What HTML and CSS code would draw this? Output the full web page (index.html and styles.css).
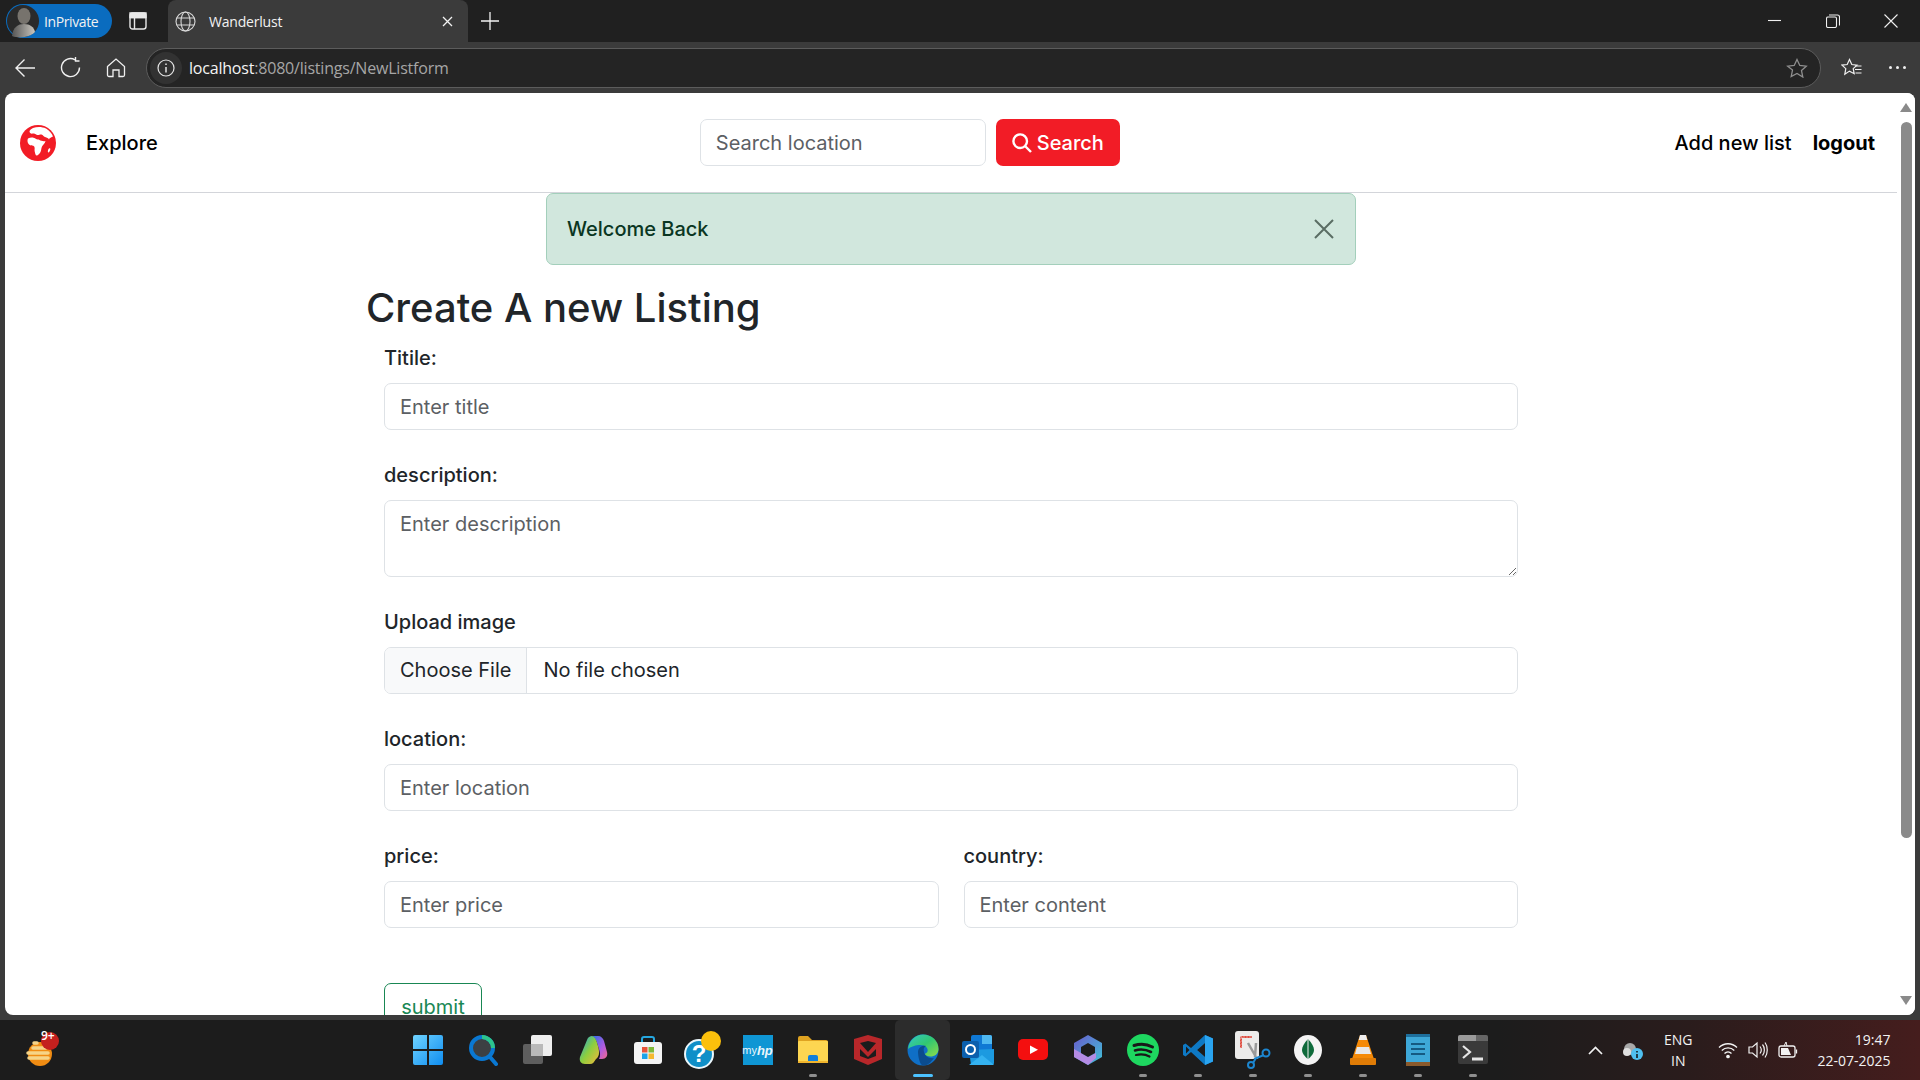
FILE: index.html
```html
<!DOCTYPE html>
<html lang="en">
<head>
    <meta charset="UTF-8">
    <meta name="viewport" content="width=device-width, initial-scale=1.0">
    <title>Wanderlust</title>
    <link rel="stylesheet" href="styles.css">
</head>
<body>
    <div class="browser">
        <!-- Title bar -->
        <div class="titlebar">
            <div class="inprivate">
                <span class="avatar">
                    <svg width="34" height="34" viewBox="0 0 34 34"><defs><linearGradient id="av" x1="0" x2="1"><stop offset="0" stop-color="#555"/><stop offset="1" stop-color="#c9c5bd"/></linearGradient></defs><circle cx="17" cy="17" r="16" fill="#2a2a2a"/><ellipse cx="18" cy="12" rx="6.5" ry="8" fill="#77736d"/><path d="M6 32c1-9 6-12 12-12s10 3 11 8c-5 5-15 7-23 4z" fill="url(#av)"/></svg>
                </span>
                <span>InPrivate</span>
            </div>
            <svg class="tab-actions" width="18" height="18" viewBox="0 0 18 18" fill="none" stroke="#e8e8e8" stroke-width="1.4"><rect x="1" y="1" width="16" height="16" rx="2.5"/><path d="M1 5.5h16M5.5 5.5V17"/><path d="M1 1h16v4.5H1z" fill="#e8e8e8"/></svg>
            <div class="tab">
                <svg width="21" height="21" viewBox="0 0 21 21" fill="none" stroke="#d8d8d8" stroke-width="1.1"><circle cx="10.5" cy="10.5" r="9.5"/><ellipse cx="10.5" cy="10.5" rx="4.5" ry="9.5"/><path d="M1.8 7h17.4M1.8 14h17.4"/></svg>
                <span class="tab-title">Wanderlust</span>
                <svg class="tab-close" width="11" height="11" viewBox="0 0 11 11" stroke="#f2f2f2" stroke-width="1.3"><path d="M1 1l9 9M10 1l-9 9"/></svg>
            </div>
            <svg class="new-tab" width="18" height="18" viewBox="0 0 18 18" stroke="#f2f2f2" stroke-width="1.3"><path d="M9 0v18M0 9h18"/></svg>
            <div class="window-controls">
                <svg width="14" height="14" viewBox="0 0 14 14" stroke="#f0f0f0" stroke-width="1.1"><path d="M0 6.5h13"/></svg>
                <svg width="14" height="14" viewBox="0 0 14 14" fill="none" stroke="#f0f0f0" stroke-width="1.1"><rect x=".5" y="3" width="10" height="10.5" rx="1.5"/><path d="M3 1h8.5A2 2 0 0 1 13.500 3v8.500"/></svg>
                <svg width="14" height="14" viewBox="0 0 14 14" stroke="#f0f0f0" stroke-width="1.1"><path d="M.5.5l13 13M13.500.5l-13 13"/></svg>
            </div>
        </div>

        <!-- Toolbar -->
        <div class="toolbar">
            <svg class="tool-back" width="20" height="20" viewBox="0 0 20 20" fill="none" stroke="#f0f0f0" stroke-width="1.4"><path d="M20 10H1M9.500 1.500L1 10l8.500 8.500"/></svg>
            <svg class="tool-reload" width="21" height="21" viewBox="0 0 21 21" fill="none" stroke="#f0f0f0" stroke-width="1.4"><path d="M15 2.800A9 9 0 1 0 19.500 10.500"/><path d="M15.500 0v4h4"/></svg>
            <svg class="tool-home" width="20" height="20" viewBox="0 0 20 20" fill="none" stroke="#f0f0f0" stroke-width="1.3"><path d="M1.500 8.500L10 1l8.500 7.500V17a1.500 1.500 0 0 1-1.500 1.500h-4V12H7v6.500H3A1.500 1.500 0 0 1 1.500 17z"/></svg>
            <div class="address-bar">
                <span class="site-info">
                    <svg width="18" height="18" viewBox="0 0 18 18" fill="none" stroke="#e4e4e4" stroke-width="1.2"><circle cx="9" cy="9" r="8"/><path d="M9 8v5.500M9 4.500v1.500" stroke-width="1.500"/></svg>
                </span>
                <span class="url"><span class="url-host">localhost</span>:8080/listings/NewListform</span>
                <svg class="addr-star" width="22" height="20" viewBox="0 0 22 20" fill="none" stroke="#8f8f8f" stroke-width="1.3"><path d="M11 1.500l2.800 6 6.500.7-4.800 4.400 1.300 6.400L11 15.400l-5.800 3.100 1.300-6.400L1.700 8.200l6.500-.7z"/></svg>
            </div>
            <svg class="tool-fav" width="21" height="20" viewBox="0 0 21 20" fill="none" stroke="#f0f0f0" stroke-width="1.200"><path d="M8.500 1.500l2.300 5 5.200.6-3.800 3.500 1 5.100-4.700-2.600-4.700 3.200 1-5.700L1 7.100l5.200-.6z"/><path d="M14 8h6.500M14 11.500h6.500M14.500 15h6"/></svg>
            <div class="tool-more"><i></i><i></i><i></i></div>
        </div>

        <!-- Page -->
        <div class="viewport">
            <div class="page">
                <nav class="navbar">
                    <svg class="brand" width="36" height="36" viewBox="0 0 36 36"><circle cx="18" cy="18" r="18" fill="#f21c26"/><path fill="#fff" d="M13 3c4-1.500 9-1.500 13 .5 3.500 2 6 5 7 8-1.500 1-3.500 1-4 3-.7-1.500-2-2-4-2.500-1.500-.5-2-2-3.500-2.500-1.500-.5-2.500 1-4 .5S15 8 13 8.500 9.500 8 9.500 6.500 11.500 4 13 3z"/><path fill="#fff" d="M8 13.500c3-1.500 6-1 8 .5 1 .7 2.500.2 3.500 1 1.500 1 4 1.500 6 1-.5 2.500-2.500 3.500-3.500 5.500s-.5 3.500-1.500 5.500c-.8 1.500-2.500 3.500-3.800 3.500-1.200 0-1.500-2-2-4s.5-3.500-.5-5-3-.5-4.500-1.500-3-3.500-1.700-6.500z"/><path fill="#fff" d="M29 23.500c.7-.5 1.500 0 1.300 1s-1.200 3-2 3-.5-3 .7-4z"/></svg>
                    <a class="nav-link explore" href="#">Explore</a>
                    <form class="nav-search">
                        <input class="control search-input" type="text" placeholder="Search location">
                        <button class="search-btn" type="button">
                            <svg width="20" height="20" viewBox="0 0 20 20" fill="none" stroke="#fff" stroke-width="2.400"><circle cx="8.200" cy="8.200" r="6.800"/><path d="M13 13l6 6"/></svg>
                            Search
                        </button>
                    </form>
                    <div class="nav-right">
                        <a class="nav-link" href="#">Add new list</a>
                        <a class="nav-link logout" href="#">logout</a>
                    </div>
                </nav>

                <div class="alert">
                    <span>Welcome Back</span>
                    <svg width="20" height="20" viewBox="0 0 20 20" stroke="#5a6d64" stroke-width="2"><path d="M1 1l18 18M19 1L1 19"/></svg>
                </div>

                <main class="listing">
                    <h2 class="listing-title">Create A new Listing</h2>
                    <form class="listing-form">
                        <div class="field">
                            <label>Titile:</label>
                            <input class="control" type="text" placeholder="Enter title">
                        </div>
                        <div class="field">
                            <label>description:</label>
                            <textarea class="control" placeholder="Enter description"></textarea>
                        </div>
                        <div class="field">
                            <label>Upload image</label>
                            <input class="control file-input" type="file">
                        </div>
                        <div class="field">
                            <label>location:</label>
                            <input class="control" type="text" placeholder="Enter location">
                        </div>
                        <div class="field-row">
                            <div class="field">
                                <label>price:</label>
                                <input class="control" type="text" placeholder="Enter price">
                            </div>
                            <div class="field">
                                <label>country:</label>
                                <input class="control" type="text" placeholder="Enter content">
                            </div>
                        </div>
                        <button class="submit-btn" type="button">submit</button>
                    </form>
                </main>
            </div>

            <div class="scrollbar">
                <span class="arrow-up"></span>
                <span class="thumb"></span>
                <span class="arrow-down"></span>
            </div>
        </div>

        <!-- Taskbar -->
        <div class="taskbar">
            <div class="task-left">
                <svg width="36" height="36" viewBox="0 0 36 36"><circle cx="16" cy="22" r="12" fill="#f08c13"/><g stroke="#f6d488" stroke-width="3.500" stroke-linecap="round"><path d="M5 26h19M4 21h20M9 16h13M10 11h3"/></g><circle cx="26" cy="9" r="9" fill="#c4201e"/></svg>
                <span class="task-badge">9+</span>
            </div>
            <div class="task-icons">
                <span class="task-icon">
                    <svg width="30" height="30" viewBox="0 0 30 30"><defs><linearGradient id="win" x1="0" y1="0" x2="1" y2="1"><stop offset="0" stop-color="#6fd3ff"/><stop offset="1" stop-color="#0f8df0"/></linearGradient></defs><path fill="url(#win)" d="M2 0h12v14H0V2a2 2 0 0 1 2-2zM16 0h12a2 2 0 0 1 2 2v12H16zM0 16h14v14H2a2 2 0 0 1-2-2zM16 16h14v12a2 2 0 0 1-2 2H16z"/></svg>
                </span>
                <span class="task-icon">
                    <svg width="30" height="32" viewBox="0 0 30 32" fill="none"><circle cx="14" cy="14" r="11" fill="#3c4043" stroke="#0a78d2" stroke-width="4"/><path d="M14 3a11 11 0 0 1 11 11" stroke="#2dc58c" stroke-width="4"/><path d="M22 23l6 7" stroke="#0a78d2" stroke-width="4" stroke-linecap="round"/></svg>
                </span>
                <span class="task-icon">
                    <svg width="30" height="30" viewBox="0 0 30 30"><rect x="0" y="9" width="20" height="20" rx="2" fill="#5e5e5e"/><rect x="8" y="0" width="21" height="21" rx="2" fill="#eeeeee"/><rect x="8" y="9" width="12" height="12" fill="#b9b9b9"/></svg>
                </span>
                <span class="task-icon">
                    <svg width="30" height="30" viewBox="0 0 30 30"><defs><linearGradient id="cop" x1="0" y1="0" x2="1" y2="1"><stop offset="0" stop-color="#17a2e8"/><stop offset=".5" stop-color="#8ccf3e"/><stop offset="1" stop-color="#f5b83c"/></linearGradient><linearGradient id="cop2" x1="0" y1="0" x2="1" y2="1"><stop offset="0" stop-color="#2a6fe8"/><stop offset=".6" stop-color="#b05be0"/><stop offset="1" stop-color="#f06a8a"/></linearGradient></defs><path fill="url(#cop2)" d="M14 1h6c3 0 5 2 6 5l3 11c1 4-1 7-5 7h-3c2-4 1-7-1-13-1-4-3-9-6-10z"/><path fill="url(#cop)" d="M9 5c1-3 3-4 5-4 4 1 5 7 6 10 2 7 1 11-2 13-2 3-3 5-6 5H7c-4 0-6-3-5-7z"/></svg>
                </span>
                <span class="task-icon">
                    <svg width="30" height="30" viewBox="0 0 30 30"><path d="M9 8V4a2 2 0 0 1 2-2h8a2 2 0 0 1 2 2v4" fill="none" stroke="#25a7e0" stroke-width="2"/><rect x="1" y="7" width="28" height="22" rx="3" fill="#f4f4f4"/><rect x="9" y="12" width="5.500" height="5.500" fill="#e8543a"/><rect x="15.500" y="12" width="5.500" height="5.500" fill="#7fba3a"/><rect x="9" y="18.500" width="5.500" height="5.500" fill="#1ea3e8"/><rect x="15.500" y="18.500" width="5.500" height="5.500" fill="#f5b92e"/></svg>
                </span>
                <span class="task-icon">
                    <svg width="38" height="38" viewBox="0 0 38 38"><circle cx="15" cy="23" r="14" fill="#0f8fc8" stroke="#eaf6fb" stroke-width="2"/><text class="help-mark" x="15" y="31" text-anchor="middle">?</text><circle cx="27" cy="10" r="10" fill="#fbc00c"/></svg>
                </span>
                <span class="task-icon">
                    <span class="myhp">my<em>hp</em></span>
                </span>
                <span class="task-icon open">
                    <svg width="30" height="30" viewBox="0 0 30 30"><path d="M0 3a2 2 0 0 1 2-2h8l4 4h14a2 2 0 0 1 2 2v4H0z" fill="#dfa321"/><rect y="6" width="30" height="22" rx="1" fill="#fdd651"/><path d="M10 22a2 2 0 0 1 2-2h6a2 2 0 0 1 2 2v6H10z" fill="#0f7fdc"/><rect x="0" y="26" width="30" height="2" fill="#f0b42d"/></svg>
                </span>
                <span class="task-icon">
                    <svg width="28" height="30" viewBox="0 0 28 30"><path fill="#b8272a" d="M0 4l14-4v6L6 8v13l8 3v6L0 24zM28 4L14 0v6l8 2v13l-8 3v6l14-6z"/><path fill="#b8272a" d="M6 8l8 9 8-9v6l-8 8-8-8z"/></svg>
                </span>
                <span class="task-icon active">
                    <svg width="32" height="32" viewBox="0 0 32 32"><defs><linearGradient id="edge" x1="0" y1="0" x2="1" y2="1"><stop offset="0" stop-color="#36c7c4"/><stop offset=".5" stop-color="#31c871"/><stop offset="1" stop-color="#8fdc4a"/></linearGradient></defs><circle cx="16" cy="16" r="15.500" fill="#0f6fc6"/><path fill="url(#edge)" d="M1 15C2 6 9 .5 16 .5 25 .5 31.500 7 31.500 15c0 5-4 7.500-8 7.500-3 0-5-1-6-2.500 3-1 3.500-3 3-5-1-3-5-4.500-9-4-4 .5-8 2-10.500 4z"/><path fill="#0b4c8e" d="M11 18c0-4 4-7 8-6-2 1-3 3-2 6 1 4 5 7 10 6-3 4-6 7.500-11 7.500-3 0-5-9-5-13.500z"/></svg>
                </span>
                <span class="task-icon">
                    <svg width="32" height="30" viewBox="0 0 32 30"><rect x="9" y="0" width="21" height="29" rx="2" fill="#0f78d4"/><path d="M20 0h8a2 2 0 0 1 2 2v7H20z" fill="#4fb8f0"/><path d="M7 15l25-1v14a2 2 0 0 1-2 2H9z" fill="#1c9ae0"/><path d="M7 30l13-10 12 10z" fill="#34b2f0"/><rect y="6" width="17" height="17" rx="2" fill="#0b5fad"/><circle cx="8.500" cy="14.500" r="4.500" fill="none" stroke="#fff" stroke-width="2"/></svg>
                </span>
                <span class="task-icon">
                    <svg width="30" height="22" viewBox="0 0 30 22"><rect width="30" height="21" rx="5" fill="#f40f0f"/><path d="M12 6.500l8 4.200-8 4.200z" fill="#fff"/></svg>
                </span>
                <span class="task-icon">
                    <svg width="28" height="30" viewBox="0 0 28 30"><defs><linearGradient id="m365" x1="0" y1="0" x2="1" y2="1"><stop offset="0" stop-color="#6a5acd"/><stop offset="1" stop-color="#3fc4d8"/></linearGradient></defs><path fill="url(#m365)" d="M14 0l14 8v14l-14 8L0 22V8z"/><path fill="#b48be4" d="M0 14l14 8 8-4v5l-8 7L0 22z"/><path d="M14 8l7 4v6l-7 4-7-4v-6z" fill="#1c1c1c"/></svg>
                </span>
                <span class="task-icon open">
                    <svg width="32" height="32" viewBox="0 0 32 32" fill="none" stroke="#181818" stroke-linecap="round"><circle cx="16" cy="16" r="16" fill="#1ed760" stroke="none"/><path d="M7 11.500c6-2 13-1.500 18.500 1.500" stroke-width="3"/><path d="M8 16.500c5-1.500 11-1 16 1.500" stroke-width="2.600"/><path d="M9 21c4.500-1 9.500-.7 13.500 1.500" stroke-width="2.200"/></svg>
                </span>
                <span class="task-icon open">
                    <svg width="30" height="30" viewBox="0 0 30 30"><path fill="#0e79c4" d="M22 0l8 3.500v23L22 30 8 17l-5.500 4.500L0 20v-10l2.500-1.500L8 13z"/><path fill="#2aa4f0" d="M22 0l8 3.500v23L22 30zM22 8l-8 7 8 7z"/><path fill="#1c1c1c" d="M22 8v14l-8-7zM3 11.500v7L6.500 15z"/></svg>
                </span>
                <span class="task-icon open">
                    <svg width="36" height="38" viewBox="0 0 36 38"><rect x="0" y="0" width="24" height="28" rx="3" fill="#ecebea"/><path d="M5 5h12v2H5zM5 5h2v12H5z" fill="#e0493d" stroke="#ecebea" stroke-dasharray="2 1" stroke-width=".5"/><path d="M13 12l8 14M21 12l-1 14" stroke="#9a9a9a" stroke-width="2.500"/><circle cx="31" cy="22" r="3.500" fill="none" stroke="#1c86d0" stroke-width="2"/><circle cx="16" cy="34" r="3" fill="none" stroke="#1c86d0" stroke-width="2"/><path d="M29 24l-10 4M18 32l3-5" stroke="#1c86d0" stroke-width="2"/></svg>
                </span>
                <span class="task-icon open">
                    <svg width="30" height="30" viewBox="0 0 30 30"><ellipse cx="15" cy="15" rx="14" ry="15" fill="#f4f4f4"/><path d="M15 4c4 4 6 8 6 11s-3 7-6 9c-3-2-6-6-6-9s2-7 6-11z" fill="#0f6b3b"/><path d="M15 4v25" stroke="#f4f4f4"/></svg>
                </span>
                <span class="task-icon open">
                    <svg width="26" height="30" viewBox="0 0 26 30"><path d="M10 0h6l8 24H2z" fill="#f58a07"/><path d="M7 12h12l2 7H5z" fill="#e8e8e8"/><rect y="23" width="26" height="7" rx="1" fill="#e07c06"/><path d="M10 0h6l1.300 5H8.700z" fill="#eee"/></svg>
                </span>
                <span class="task-icon open">
                    <svg width="24" height="32" viewBox="0 0 24 32"><rect y="2" width="24" height="30" rx="1" fill="#3ea8d8"/><rect y="28" width="24" height="4" fill="#8a5a2c"/><path d="M0 0h24v3H0z" fill="#1e6f9c"/><path d="M5 10h14M5 15h14M5 20h14" stroke="#155a82" stroke-width="2.200"/></svg>
                </span>
                <span class="task-icon open">
                    <svg width="30" height="30" viewBox="0 0 30 30" fill="none"><rect width="30" height="29" rx="2" fill="#3a3a3a"/><path d="M0 2a2 2 0 0 1 2-2h16v6H0z" fill="#9a9a9a"/><path d="M18 0h10a2 2 0 0 1 2 2v4H18z" fill="#666"/><path d="M5 11l7 6-7 6" stroke="#e6e6e6" stroke-width="2.200"/><path d="M14 24h11" stroke="#e6e6e6" stroke-width="3"/></svg>
                </span>
            </div>
            <div class="tray">
                <svg class="tray-caret" width="15" height="9" viewBox="0 0 15 9" fill="none" stroke="#f2f2f2" stroke-width="1.700"><path d="M1 8l6.500-6.500L14 8"/></svg>
                <svg class="tray-cloud" width="22" height="22" viewBox="0 0 22 22"><circle cx="8" cy="10" r="6" fill="#a8a8a8"/><circle cx="5" cy="13" r="4" fill="#e0e0e0"/><circle cx="15" cy="15" r="6" fill="#4fc0f0"/><path d="M15 12v1.500M15 15v4" stroke="#111" stroke-width="1.500"/></svg>
                <div class="tray-lang"><span>ENG</span><span>IN</span></div>
                <svg class="tray-wifi" width="20" height="18" viewBox="0 0 20 18" fill="none" stroke="#f2f2f2" stroke-width="1.300"><path d="M1 6.500c5-5 13-5 18 0M3.800 9.500c3.500-3.500 9-3.500 12.500 0M6.500 12.500c2-2 5-2 7 0"/><circle cx="10" cy="15.500" r="1.200" fill="#f2f2f2"/></svg>
                <svg class="tray-volume" width="20" height="20" viewBox="0 0 20 20" fill="none" stroke="#f2f2f2" stroke-width="1.200"><path d="M1 7h3.500L9 3v14l-4.500-4H1z"/><path d="M12 6.500c1.500 2 1.500 5 0 7M14.500 4.500c2.500 3 2.500 8 0 11M17 2.500c3 4 3 11 0 15"/></svg>
                <svg class="tray-battery" width="20" height="20" viewBox="0 0 20 20" fill="none" stroke="#f2f2f2" stroke-width="1.300"><rect x="1" y="6" width="16" height="11" rx="2"/><path d="M18.500 9.500v4"/><path d="M3 8h7l3 7H3z" fill="#f2f2f2" stroke="none"/><path d="M6 6l2-4M8 2l1 4" stroke-width="1"/></svg>
                <div class="tray-clock"><span>19:47</span><span>22-07-2025</span></div>
            </div>
        </div>
    </div>
</body>
</html>
```

FILE: styles.css
```css
* {
    margin: 0;
    padding: 0;
    box-sizing: border-box;
}

body {
    width: 1920px;
    height: 1080px;
    overflow: hidden;
    background: #3b3b3b;
    font-family: "Inter", "Liberation Sans", sans-serif;
    color: #212529;
}

a {
    text-decoration: none;
}

.browser {
    display: flex;
    flex-direction: column;
    height: 1080px;
}

/* Title bar */
.titlebar {
    display: flex;
    align-items: center;
    height: 42px;
    flex: none;
    background: #202020;
    color: #f2f2f2;
    font-family: "Open Sans", sans-serif;
    font-size: 14px;
}

.inprivate {
    display: flex;
    align-items: center;
    gap: 4px;
    width: 106px;
    height: 34px;
    margin-left: 6px;
    background: #0a6cbf;
    border-radius: 17px;
    font-size: 14px;
    letter-spacing: -0.4px;
}

.avatar {
    display: flex;
    width: 34px;
    height: 34px;
}

.tab-actions {
    margin-left: 17px;
}

.tab {
    display: flex;
    align-items: center;
    align-self: flex-end;
    width: 300px;
    height: 42px;
    margin-left: 21px;
    padding: 0 15px 0 7px;
    background: #3b3b3b;
    border-radius: 8px 8px 0 0;
}

.tab-title {
    flex: 1;
    margin-left: 13px;
    letter-spacing: -0.2px;
}

.new-tab {
    margin-left: 13px;
}

.window-controls {
    display: flex;
    gap: 44px;
    margin-left: auto;
    margin-right: 22px;
}

/* Toolbar */
.toolbar {
    display: flex;
    align-items: center;
    height: 51px;
    flex: none;
    background: #3b3b3b;
}

.tool-back {
    margin-left: 15px;
}

.tool-reload {
    margin-left: 25px;
}

.tool-home {
    margin-left: 25px;
}

.address-bar {
    display: flex;
    align-items: center;
    width: 1675px;
    height: 40px;
    margin-left: 20px;
    background: #242424;
    border: 1px solid #5c5c5c;
    border-radius: 20px;
}

.site-info {
    display: flex;
    align-items: center;
    justify-content: center;
    width: 32px;
    height: 32px;
    margin-left: 3px;
    background: #323232;
    border-radius: 50%;
}

.url {
    flex: 1;
    margin-left: 7px;
    font-family: "Open Sans", sans-serif;
    font-size: 16px;
    letter-spacing: -0.2px;
    color: #a6a6a6;
}

.url-host {
    color: #f4f4f4;
}

.addr-star {
    margin-right: 12px;
}

.tool-fav {
    margin-left: 20px;
}

.tool-more {
    display: flex;
    gap: 4px;
    margin-left: 27px;
}

.tool-more i {
    width: 3px;
    height: 3px;
    background: #f0f0f0;
    border-radius: 50%;
}

/* Page */
.viewport {
    display: flex;
    height: 922px;
    flex: none;
    margin: 0 5px;
    background: #fff;
    border-radius: 8px;
    overflow: hidden;
}

.page {
    flex: 1;
    min-width: 0;
    overflow: hidden;
}

.navbar {
    display: flex;
    align-items: center;
    height: 100px;
    padding: 0 22px 0 15px;
    border-bottom: 1px solid #d3d5da;
}

.brand {
    flex: none;
}

.nav-link {
    font-size: 20px;
    font-weight: 500;
    color: #000;
}

.explore {
    margin-left: 30px;
}

.nav-search {
    display: flex;
    gap: 10px;
    margin-left: 542px;
}

.nav-right {
    display: flex;
    gap: 21px;
    margin-left: auto;
}

.logout {
    font-weight: 700;
}

.control {
    display: block;
    width: 100%;
    height: 47px;
    padding: 0 15px;
    background: #fff;
    border: 1px solid #dee2e6;
    border-radius: 7px;
    font: inherit;
    font-size: 20px;
    color: #212529;
    outline: none;
}

.control::placeholder {
    color: #5c6064;
    opacity: 1;
}

.search-input {
    width: 286px;
}

.search-btn {
    display: flex;
    align-items: center;
    justify-content: center;
    gap: 5px;
    width: 124px;
    height: 47px;
    background: #f21c26;
    border: none;
    border-radius: 7px;
    font: inherit;
    font-size: 20px;
    font-weight: 500;
    color: #fff;
}

.alert {
    display: flex;
    align-items: center;
    justify-content: space-between;
    width: 810px;
    height: 72px;
    margin: 0 0 19px 541px;
    padding: 0 21px 0 20px;
    background: #d1e7dd;
    border: 1px solid #a3cfbb;
    border-radius: 7px;
    font-size: 20px;
    font-weight: 500;
    color: #0a3622;
}

/* Form */
.listing {
    width: 1152px;
    margin-left: 361px;
}

.listing-title {
    height: 48px;
    margin-bottom: 11px;
    font-size: 40px;
    font-weight: 500;
    line-height: 48px;
}

.listing-form {
    padding-left: 18px;
}

.field {
    flex: 1;
    margin-bottom: 30px;
}

.field label {
    display: block;
    height: 30px;
    margin-bottom: 10px;
    font-size: 20px;
    font-weight: 500;
    line-height: 30px;
}

textarea.control {
    height: 77px;
    padding-top: 8px;
    line-height: 30px;
}

.file-input {
    padding: 0;
    line-height: 45px;
}

.file-input::file-selector-button {
    height: 45px;
    margin: 0 16px 0 0;
    padding: 0 15px;
    background: #f8f9fa;
    border: none;
    border-right: 1px solid #dee2e6;
    font: inherit;
    color: #212529;
}

.field-row {
    display: flex;
    gap: 25px;
    margin-bottom: 25px;
}

.submit-btn {
    display: block;
    width: 98px;
    height: 47px;
    background: #fff;
    border: 1px solid #198754;
    border-radius: 7px;
    font: inherit;
    font-size: 20px;
    color: #198754;
}

/* Scrollbar */
.scrollbar {
    display: flex;
    flex-direction: column;
    align-items: center;
    width: 18px;
    flex: none;
    background: #fff;
    padding-top: 10px;
}

.arrow-up {
    width: 0;
    height: 0;
    border-left: 6px solid transparent;
    border-right: 6px solid transparent;
    border-bottom: 9px solid #8a8a8a;
}

.thumb {
    width: 11px;
    height: 716px;
    margin-top: 10px;
    background: #8a8a8a;
    border-radius: 6px;
}

.arrow-down {
    width: 0;
    height: 0;
    margin-top: auto;
    margin-bottom: 10px;
    border-left: 6px solid transparent;
    border-right: 6px solid transparent;
    border-top: 9px solid #8a8a8a;
}

/* Taskbar */
.taskbar {
    display: flex;
    align-items: center;
    height: 60px;
    flex: none;
    margin-top: 5px;
    background: linear-gradient(90deg, #1c1c1c 0%, #1c1c1c 78%, #2a1c1c 88%, #451d1d 100%);
    color: #f2f2f2;
    font-family: "Open Sans", sans-serif;
    font-size: 14px;
}

.task-left {
    position: relative;
    display: flex;
    width: 400px;
    height: 60px;
    flex: none;
    align-items: center;
    padding-left: 24px;
}

.task-badge {
    position: absolute;
    left: 41px;
    top: 7px;
    font-size: 12px;
    font-weight: 600;
    color: #fff;
}

.task-icons {
    display: flex;
}

.task-icon {
    position: relative;
    display: flex;
    align-items: center;
    justify-content: center;
    width: 55px;
    height: 60px;
}

.task-icon.open::after,
.task-icon.active::after {
    content: "";
    position: absolute;
    bottom: 3px;
    left: 50%;
    width: 8px;
    height: 3px;
    margin-left: -4px;
    background: #8f8f8f;
    border-radius: 2px;
}

.task-icon.active {
    background: #2c2c2c;
    border-radius: 5px;
}

.task-icon.active::after {
    width: 20px;
    margin-left: -10px;
    background: #4cc2ff;
}

.help-mark {
    font-family: "Liberation Sans", sans-serif;
    font-size: 24px;
    font-weight: 700;
    fill: #fff;
}

.myhp {
    display: flex;
    align-items: center;
    justify-content: center;
    width: 30px;
    height: 30px;
    background: #0f96d4;
    font-family: "Liberation Sans", sans-serif;
    font-size: 11px;
    color: #eaf6fb;
}

.myhp em {
    font-weight: 700;
    font-size: 13px;
}

.tray {
    display: flex;
    align-items: center;
    flex: 1;
    height: 60px;
}

.tray-caret {
    margin-left: 88px;
}

.tray-cloud {
    margin-left: 19px;
}

.tray-lang {
    display: flex;
    flex-direction: column;
    align-items: center;
    margin-left: 20px;
    line-height: 21px;
}

.tray-wifi {
    margin-left: 25px;
}

.tray-volume {
    margin-left: 10px;
}

.tray-battery {
    margin-left: 10px;
}

.tray-clock {
    display: flex;
    flex-direction: column;
    align-items: flex-end;
    margin-left: 20px;
    line-height: 21px;
}
```
